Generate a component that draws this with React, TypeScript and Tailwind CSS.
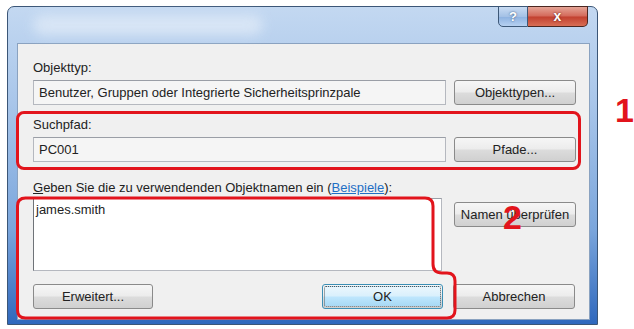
const font = "font-['Liberation_Sans',Arial,sans-serif]";

const Btn = ({ label, w, focus }: { label: React.ReactNode; w: string; focus?: boolean }) => (
  <div
    className={`${w} h-[25px] shrink-0 rounded-[3px] border ${
      focus ? "border-[#3c8fb5] p-[1px]" : "border-[#8a8a8a]"
    } bg-[linear-gradient(#f6f6f6,#ececec_48%,#dcdcdc_52%,#d0d0d0)]`}
  >
    <div
      className={`h-full w-full flex items-center justify-center text-[13px] text-[#222] ${
        focus ? "border border-dotted border-[#555] rounded-[2px] bg-[linear-gradient(#eaf6fd,#d9f0fc_48%,#bee6fd_52%,#a7d9f5)]" : ""
      }`}
    >
      {label}
    </div>
  </div>
);

export default function App() {
  return (
    <div className={`w-[634px] h-[329px] bg-white relative overflow-hidden pt-[6px] pl-[7px] ${font}`}>
      {/* window */}
      <div className="w-[591px] h-[319px] rounded-t-[7px] border border-[#3b5677] bg-[linear-gradient(#c3d8f1,#a9c6ea_30%,#7ba6dc_70%,#2f68bd)] flex flex-col relative">
        {/* title bar */}
        <div className="h-[36px] shrink-0 relative">
          <div className="absolute left-[25px] top-[8px] w-[230px] h-[20px] rounded-full bg-[#dfeaf7] blur-[6px] opacity-80" />
          <div className="absolute right-[9px] top-[-1px] flex">
            <div className="w-[30px] h-[21px] rounded-bl-[5px] border border-[#3d5878] bg-[linear-gradient(#c9dcf3,#a4c1e6_50%,#8db2e1_52%,#b6d0f0)] flex items-center justify-center text-white font-bold text-[13px] [text-shadow:0_0_2px_#2c4a70]">
              ?
            </div>
            <div className="w-[60px] h-[21px] rounded-br-[5px] border border-l-0 border-[#4b2620] bg-[linear-gradient(#e5a496,#d4695a_48%,#c2402f_52%,#d86e55)] flex items-center justify-center text-white font-bold text-[14px] [text-shadow:0_0_2px_#5a1610]">
              x
            </div>
          </div>
        </div>
        {/* client area */}
        <div className="ml-[9px] w-[573px] h-[277px] border border-[#8aa2c0] bg-[#f0f0f0] pl-[15px] text-[13px] leading-[15px] text-[#222] flex flex-col">
          <div className="mt-[16px]">Objekttyp:</div>
          <div className="mt-[5px] flex items-center gap-[8px]">
            <div className="w-[413px] h-[25px] border border-[#b5b8bf] border-t-[#9a9ea6] bg-[#f5f5f5] pl-[5px] flex items-center">
              Benutzer, Gruppen oder Integrierte Sicherheitsprinzpale
            </div>
            <Btn label="Objekttypen..." w="w-[122px]" />
          </div>
          <div className="mt-[12px]">Suchpfad:</div>
          <div className="mt-[5px] flex items-center gap-[8px]">
            <div className="w-[413px] h-[25px] border border-[#b5b8bf] border-t-[#9a9ea6] bg-[#f5f5f5] pl-[5px] flex items-center">
              PC001
            </div>
            <Btn label="Pfade..." w="w-[122px]" />
          </div>
          <div className="mt-[18px]">
            <span className="underline">G</span>eben Sie die zu verwendenden Objektnamen ein (
            <span className="text-[#1f6fc5] underline">Beispiele</span>):
          </div>
          <div className="mt-[3px] flex items-start gap-[12px]">
            <div className="w-[409px] h-[73px] border border-[#b5b8bf] border-t-[#9a9ea6] border-l-[#6f7378] bg-white pl-[2px] pt-[3px]">
              james.smith
            </div>
            <div className="mt-[4px]">
              <Btn label="Namen überprüfen" w="w-[122px]" />
            </div>
          </div>
          <div className="mt-[13px] flex items-center">
            <Btn label="Erweitert..." w="w-[120px]" />
            <div className="ml-[169px]">
              <Btn label="OK" w="w-[121px]" focus />
            </div>
            <div className="ml-[10px]">
              <Btn label="Abbrechen" w="w-[122px]" />
            </div>
          </div>
        </div>
      </div>

      {/* annotations */}
      <div className="absolute left-[16px] top-[111px] w-[565px] h-[59px] rounded-[8px] border-[3px] border-[#e2141c]" />
      <svg className="absolute left-0 top-0" width="634" height="329" viewBox="0 0 634 329">
        <path
          d="M17.5 206 Q17.5 198 25.5 198 L425 198 Q433 198 433 206 L433 264 Q433 273 442 273 L447 273 Q455 273 455 281 L455 310 Q455 318 447 318 L25.5 318 Q17.5 318 17.5 310 Z"
          fill="none"
          stroke="#e2141c"
          strokeWidth="3"
        />
      </svg>
      <div className="absolute left-[615px] top-[93px] text-[34px] leading-[34px] font-bold text-[#e2141c]">1</div>
      <div className="absolute left-[503px] top-[200px] text-[34px] leading-[34px] font-bold text-[#e2141c]">2</div>
    </div>
  );
}
